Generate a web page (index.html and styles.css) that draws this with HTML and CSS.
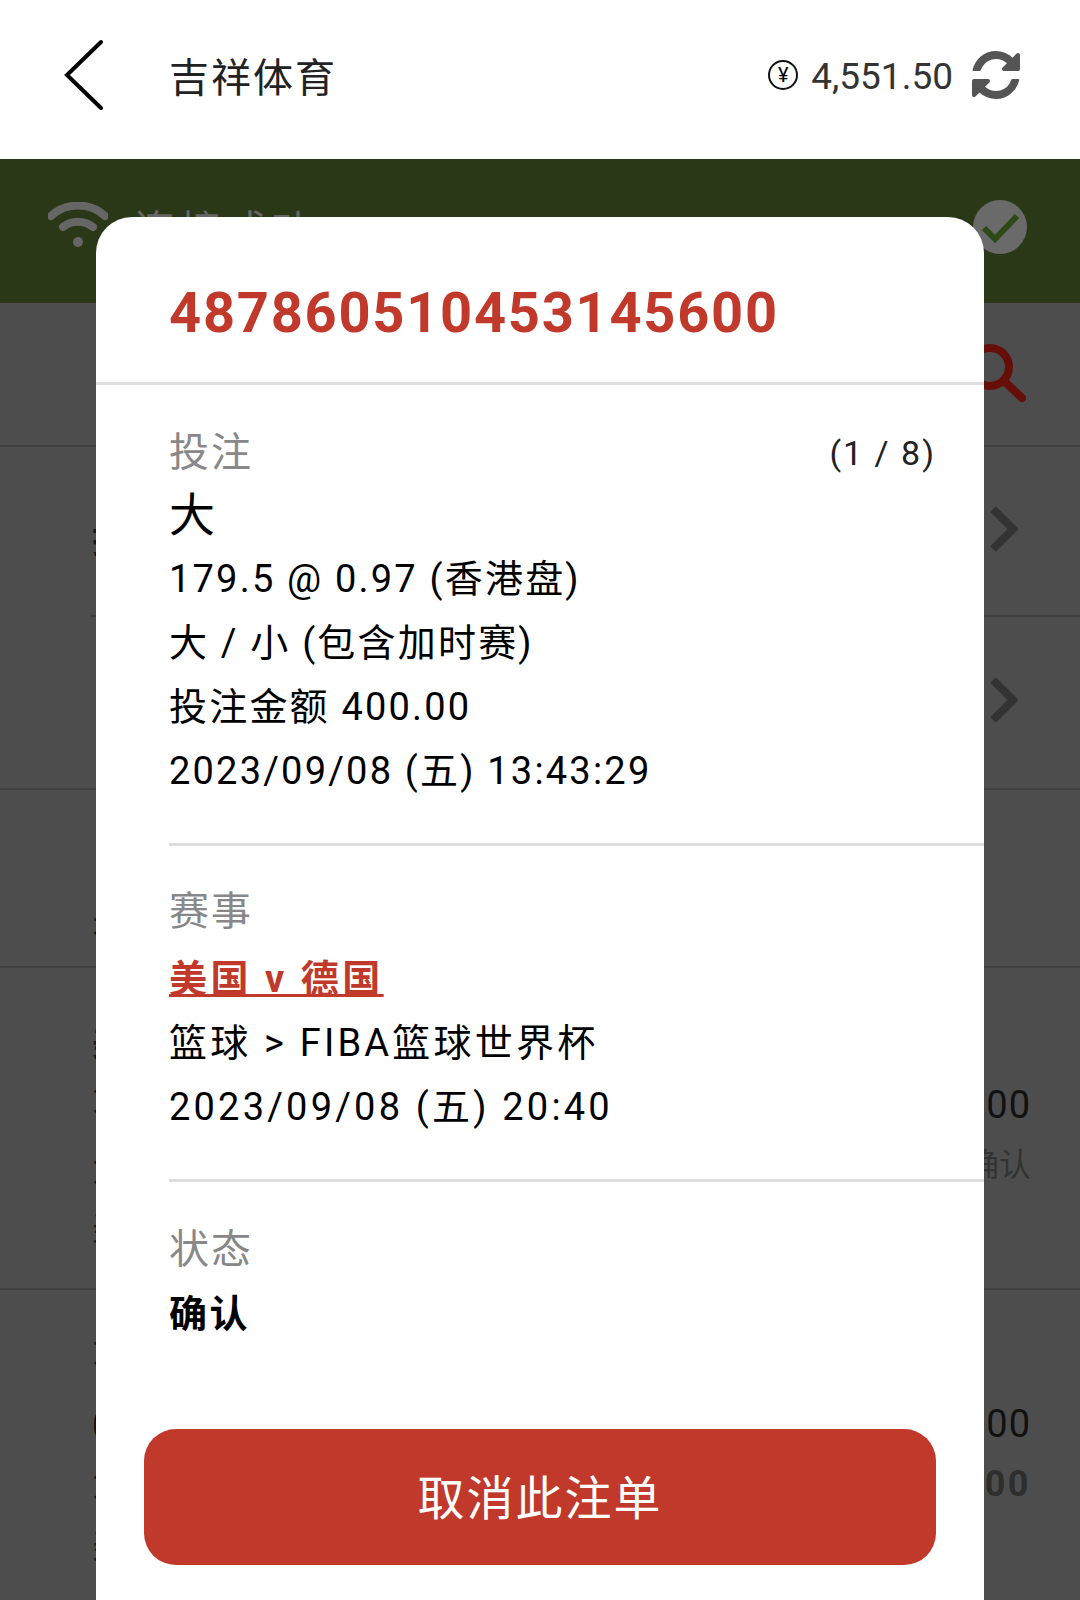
FILE: index.html
```html
<!DOCTYPE html>
<html lang="zh-CN">
<head>
  <meta charset="UTF-8">
  <title>吉祥体育</title>
  <link rel="stylesheet" href="styles.css">
</head>
<body>
  <header class="topbar">
    <svg class="back" viewBox="0 0 40 72"><path d="M37 3 3 36l34 33"/></svg>
    <div class="title">吉祥体育</div>
    <div class="balance">
      <span class="yen">¥</span>
      <span class="amount">4,551.50</span>
      <svg class="refresh" viewBox="0 0 1792 1792"><path d="M1639 1056q0 5-1 7-64 268-268 434.5t-478 166.5q-146 0-282.5-55t-243.5-157l-129 129q-19 19-45 19t-45-19-19-45v-448q0-26 19-45t45-19h448q26 0 45 19t19 45-19 45l-137 137q71 66 161 102t187 36q134 0 250-65t186-179q11-17 53-117 8-23 30-23h192q13 0 22.5 9.5t9.5 22.5zm25-800v448q0 26-19 45t-45 19h-448q-26 0-45-19t-19-45 19-45l138-138q-148-137-349-137-134 0-250 65t-186 179q-11 17-53 117-8 23-30 23h-199q-13 0-22.5-9.5t-9.5-22.5v-7q65-268 270-434.5t480-166.5q146 0 284 55.5t245 156.5l130-129q19-19 45-19t45 19 19 45z"/></svg>
    </div>
  </header>

  <div class="banner">
    <svg class="wifi" viewBox="0 0 60 46"><path d="M3 14C18 0 42 0 57 14M15 25c9-7 21-7 30 0"/><circle cx="30" cy="40" r="5"/></svg>
    <span class="banner-text">连接成功</span>
    <svg class="ok" viewBox="0 0 54 54"><circle cx="27" cy="27" r="27"/><path d="M11 28l11 11 22-23"/></svg>
  </div>

  <div class="search-row">
    <svg class="search" viewBox="0 0 64 64"><circle cx="28" cy="27" r="19"/><path d="M42 41l18 17"/></svg>
  </div>

  <div class="row row-link row-a"><span class="row-name">投</span><svg class="chev" viewBox="0 0 28 46"><path d="M3 3l20 20L3 43"/></svg></div>
  <div class="row row-link row-b"><svg class="chev" viewBox="0 0 28 46"><path d="M3 3l20 20L3 43"/></svg></div>
  <div class="row row-c"><span>未</span></div>
  <div class="row row-d">
    <div class="lines">
      <span>美</span>
      <span>大</span>
      <span>大</span>
      <span>美</span>
    </div>
    <div class="values">
      <span class="val">400.00</span>
      <span class="state">确认</span>
    </div>
  </div>
  <div class="row row-e">
    <div class="lines">
      <span>大</span>
      <span>0</span>
      <span>大</span>
      <span>美</span>
    </div>
    <div class="values">
      <span class="val">400.00</span>
      <span class="total">800.00</span>
    </div>
  </div>

  <section class="modal">
    <h1 class="order-no">487860510453145600</h1>
    <div class="sect first">
      <div class="label-row"><span class="label">投注</span><span class="count">(1 / 8)</span></div>
      <div class="pick">大</div>
      <div class="line">179.5 @ 0.97 (香港盘)</div>
      <div class="line">大 / 小 (包含加时赛)</div>
      <div class="line">投注金额 400.00</div>
      <div class="line">2023/09/08 (五) 13:43:29</div>
    </div>
    <div class="sect match-sect">
      <div class="label">赛事</div>
      <a class="match">美国 v 德国</a>
      <div class="line">篮球 &gt; FIBA篮球世界杯</div>
      <div class="line">2023/09/08 (五) 20:40</div>
    </div>
    <div class="sect last">
      <div class="label">状态</div>
      <div class="status">确认</div>
    </div>
    <button class="cancel">取消此注单</button>
  </section>
</body>
</html>
```

FILE: styles.css
```css
* { box-sizing: border-box; }
html, body { margin: 0; height: 1600px; overflow: hidden; }
body { position: relative; background: #4d4d4d; font-family: Roboto, "Noto Sans CJK SC", sans-serif; color: #000; }

.topbar { height: 159px; background: #fff; display: flex; align-items: center; padding: 0 56px 9px 64px; }
.back { width: 40px; height: 72px; margin-right: 65px; }
.back path { fill: none; stroke: #000; stroke-width: 4; stroke-linecap: round; }
.title { font-size: 40px; letter-spacing: 2px; color: #222; }
.balance { margin-left: auto; display: flex; align-items: center; }
.yen { width: 30px; height: 30px; border: 2px solid #111; border-radius: 50%; font-size: 20px; line-height: 26px; text-align: center; margin-right: 13px; }
.amount { font-size: 37px; color: #333; margin-right: 15px; padding-top: 3px; }
.refresh { width: 56px; height: 56px; }
.refresh path { fill: #555; }

.banner { height: 144px; background: #2b3817; display: flex; align-items: center; padding: 0 53px 8px 48px; color: #666; }
.wifi { width: 60px; height: 46px; margin: 0 26px 4px 0; }
.wifi path { fill: none; stroke: #666; stroke-width: 8; stroke-linecap: round; }
.wifi circle { fill: #666; }
.banner-text { font-size: 41px; letter-spacing: 5px; }
.ok { width: 54px; height: 54px; margin-left: auto; }
.ok circle { fill: #6a6a6a; }
.ok path { fill: none; stroke: #2d4a16; stroke-width: 6; }

.search-row { height: 144px; display: flex; justify-content: flex-end; align-items: center; padding: 0 54px 4px 0; border-bottom: 2px solid #404040; }
.search { width: 64px; height: 64px; }
.search circle, .search path { fill: none; stroke: #660e0a; stroke-width: 8; stroke-linecap: round; }

.row { position: relative; display: flex; justify-content: space-between; padding: 0 49px 0 92px; border-bottom: 2px solid #404040; font-size: 36px; color: #1a1a1a; }
.row-link { align-items: center; padding: 0 62px 6px 92px; }
.row-a { height: 170px; border-bottom: 0; }
.row-a::after { content: ""; position: absolute; left: 90px; right: 0; bottom: 0; height: 2px; background: #404040; }
.row-name { align-self: flex-start; padding-top: 70px; line-height: 48px; font-weight: 700; }
.row-b { height: 173px; justify-content: flex-end; }
.row-c { height: 178px; padding-top: 102px; }
.row-d { height: 322px; padding-top: 52px; }
.row-e { height: 311px; padding-top: 36px; border-bottom: 0; }
.chev { width: 28px; height: 46px; }
.chev path { fill: none; stroke: #333; stroke-width: 8; }
.lines { display: flex; flex-direction: column; }
.lines span { line-height: 48px; }
.row-d .lines span:first-child { font-weight: 700; }
.row-d .lines span:nth-child(2) { margin-top: 6px; }
.row-d .lines span:nth-child(3) { margin-top: 23px; }
.row-d .lines span:nth-child(4) { margin-top: 11px; }
.row-e .lines span:nth-child(2) { margin-top: 28px; font-size: 38px; color: #111; }
.row-e .lines span:nth-child(3) { margin-top: 10px; }
.row-e .lines span:nth-child(4) { margin-top: 14px; }
.values { display: flex; flex-direction: column; align-items: flex-end; gap: 15px; }
.row-d .values { padding-top: 62px; }
.row-e .values { padding-top: 75px; }
.val { font-size: 38px; line-height: 46px; letter-spacing: 1px; color: #111; }
.state { font-size: 32px; line-height: 44px; color: #333; }
.total { font-size: 36px; line-height: 44px; font-weight: 700; letter-spacing: 2.5px; color: #2e2e2e; }

.modal { position: absolute; left: 96px; top: 217px; width: 888px; height: 1383px; background: #fff; border-radius: 36px 36px 0 0; }
.order-no { margin: 0; height: 168px; padding: 59px 0 0 73px; font-size: 56px; line-height: 74px; font-weight: 700; letter-spacing: 1.75px; color: #c0392b; border-bottom: 3px solid #ddd; }
.sect { margin-left: 73px; padding-top: 34px; height: 336px; border-top: 3px solid #ddd; }
.sect.first { border-top: 0; padding-top: 36px; height: 458px; }
.sect.last { padding-top: 36px; }
.label-row { display: flex; justify-content: space-between; align-items: center; padding-right: 48px; }
.label { font-size: 40px; line-height: 64px; letter-spacing: 2px; color: #888; }
.count { font-size: 34px; letter-spacing: 2px; color: #222; }
.pick { margin-top: -2px; font-size: 46px; line-height: 64px; }
.line { font-size: 38px; line-height: 64px; letter-spacing: 2.2px; }
.match-sect .line { letter-spacing: 3.2px; }
.match { display: block; width: fit-content; margin-top: 3px; font-size: 38px; line-height: 64px; font-weight: 700; letter-spacing: 3.5px; color: #c0392b; text-decoration: underline; }
.status { font-size: 38px; line-height: 64px; font-weight: 700; letter-spacing: 2.4px; }
.cancel { position: absolute; left: 48px; top: 1212px; width: 792px; height: 136px; padding-bottom: 6px; border: 0; border-radius: 32px; background: #c0392b; color: #fff; font: 47px Roboto, "Noto Sans CJK SC", sans-serif; letter-spacing: 2px; }
```
